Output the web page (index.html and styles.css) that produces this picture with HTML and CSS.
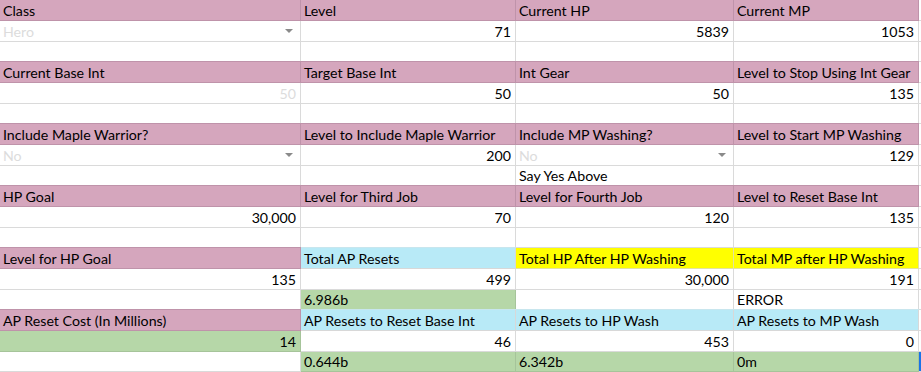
FILE: index.html
```html
<!DOCTYPE html>
<html>
<head>
<meta charset="utf-8">
<link rel="stylesheet" href="styles.css">
</head>
<body>
<div class="sheet">
  <div class="c pk">Class</div><div class="c pk">Level</div><div class="c pk">Current HP</div><div class="c pk">Current MP</div><div class="c e"></div>
  <div class="c ph dd">Hero<span class="arr"></span></div><div class="c r">71</div><div class="c r">5839</div><div class="c r">1053</div><div class="c e"></div>
  <div class="c"></div><div class="c"></div><div class="c"></div><div class="c"></div><div class="c e"></div>

  <div class="c pk">Current Base Int</div><div class="c pk">Target Base Int</div><div class="c pk">Int Gear</div><div class="c pk">Level to Stop Using Int Gear</div><div class="c e"></div>
  <div class="c r ph">50</div><div class="c r">50</div><div class="c r">50</div><div class="c r">135</div><div class="c e"></div>
  <div class="c"></div><div class="c"></div><div class="c"></div><div class="c"></div><div class="c e"></div>

  <div class="c pk">Include Maple Warrior?</div><div class="c pk">Level to Include Maple Warrior</div><div class="c pk">Include MP Washing?</div><div class="c pk">Level to Start MP Washing</div><div class="c e"></div>
  <div class="c ph dd">No<span class="arr"></span></div><div class="c r">200</div><div class="c ph dd">No<span class="arr"></span></div><div class="c r">129</div><div class="c e"></div>
  <div class="c"></div><div class="c"></div><div class="c">Say Yes Above</div><div class="c"></div><div class="c e"></div>

  <div class="c pk">HP Goal</div><div class="c pk">Level for Third Job</div><div class="c pk">Level for Fourth Job</div><div class="c pk">Level to Reset Base Int</div><div class="c e"></div>
  <div class="c r">30,000</div><div class="c r">70</div><div class="c r">120</div><div class="c r">135</div><div class="c e"></div>
  <div class="c"></div><div class="c"></div><div class="c"></div><div class="c"></div><div class="c e"></div>

  <div class="c pk">Level for HP Goal</div><div class="c cy">Total AP Resets</div><div class="c yl">Total HP After HP Washing</div><div class="c yl">Total MP after HP Washing</div><div class="c e"></div>
  <div class="c r">135</div><div class="c r">499</div><div class="c r">30,000</div><div class="c r">191</div><div class="c e"></div>
  <div class="c"></div><div class="c gr">6.986b</div><div class="c"></div><div class="c">ERROR</div><div class="c e"></div>

  <div class="c pk">AP Reset Cost (In Millions)</div><div class="c cy">AP Resets to Reset Base Int</div><div class="c cy">AP Resets to HP Wash</div><div class="c cy">AP Resets to MP Wash</div><div class="c e"></div>
  <div class="c r gr">14</div><div class="c r">46</div><div class="c r">453</div><div class="c r">0</div><div class="c e"></div>
  <div class="c"></div><div class="c gr">0.644b</div><div class="c gr">6.342b</div><div class="c gr">0m</div><div class="c e sel"></div>
</div>
</body>
</html>
```

FILE: styles.css
```css
html, body {
  margin: 0;
  padding: 0;
  background: #ffffff;
}
body {
  width: 921px;
  height: 372px;
  overflow: hidden;
  font-family: Lato, "Open Sans", sans-serif;
  font-size: 14.2px;
  color: #000000;
}
.sheet {
  display: grid;
  grid-template-columns: 301px 215px 218px 185px 2px;
  grid-template-rows: repeat(6, 21px 21px 20px);
}
.c {
  box-sizing: border-box;
  border-right: 1px solid #dadada;
  border-bottom: 1px solid #dadada;
  padding: 0 4px 0 3px;
  display: flex;
  align-items: flex-end;
  white-space: nowrap;
  overflow: hidden;
  line-height: 18px;
  background: #ffffff;
  position: relative;
}
.c.e {
  border-right: none;
}
.r {
  justify-content: flex-end;
}
.pk {
  background: #d5a6bd;
  border-color: #bf93aa;
  box-shadow: 0 -1px 0 #bf93aa;
}
.cy {
  background: #b8eaf7;
  border-color: #d8d8d8;
  box-shadow: 0 -1px 0 #c8e6ee;
}
.yl {
  background: #ffff00;
  border-color: #e2e2a0;
}
.gr {
  background: #b6d7a8;
  border-color: #a6c49a;
}
.ph {
  color: #dcdcdc;
}
.dd {
  padding-right: 10px;
}
.arr {
  position: absolute;
  right: 7px;
  top: 8px;
  width: 0;
  height: 0;
  border-left: 4px solid transparent;
  border-right: 4px solid transparent;
  border-top: 4px solid #8a8a8a;
}
.sel {
  box-shadow: inset 2px 0 0 #1a73e8;
}
```
